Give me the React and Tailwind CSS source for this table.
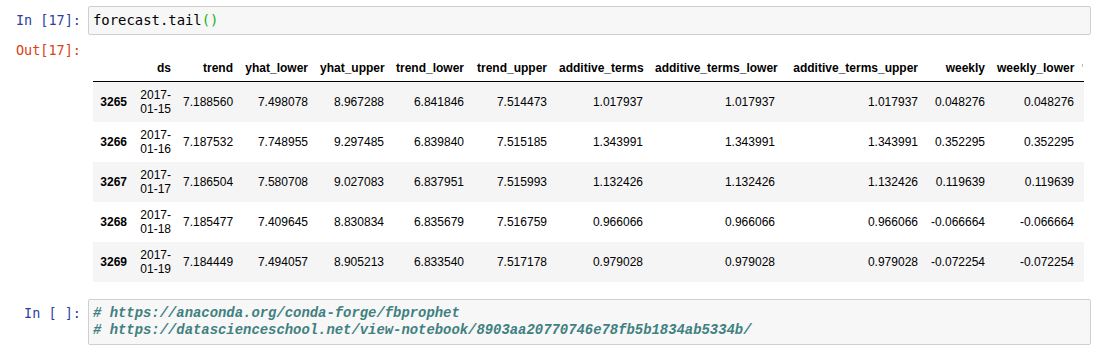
import React from "react";

const cols = [
  { name: "ds", w: "w-[44px]" },
  { name: "trend", w: "w-[62px]" },
  { name: "yhat_lower", w: "w-[75px]" },
  { name: "yhat_upper", w: "w-[76px]" },
  { name: "trend_lower", w: "w-[80px]" },
  { name: "trend_upper", w: "w-[83px]" },
  { name: "additive_terms", w: "w-[96px]" },
  { name: "additive_terms_lower", w: "w-[132px]" },
  { name: "additive_terms_upper", w: "w-[143px]" },
  { name: "weekly", w: "w-[67px]" },
  { name: "weekly_lower", w: "w-[89px]" },
];

const rows = [
  ["3265", "01-15", "7.188560", "7.498078", "8.967288", "6.841846", "7.514473", "1.017937", "1.017937", "1.017937", "0.048276", "0.048276"],
  ["3266", "01-16", "7.187532", "7.748955", "9.297485", "6.839840", "7.515185", "1.343991", "1.343991", "1.343991", "0.352295", "0.352295"],
  ["3267", "01-17", "7.186504", "7.580708", "9.027083", "6.837951", "7.515993", "1.132426", "1.132426", "1.132426", "0.119639", "0.119639"],
  ["3268", "01-18", "7.185477", "7.409645", "8.830834", "6.835679", "7.516759", "0.966066", "0.966066", "0.966066", "-0.066664", "-0.066664"],
  ["3269", "01-19", "7.184449", "7.494057", "8.905213", "6.833540", "7.517178", "0.979028", "0.979028", "0.979028", "-0.072254", "-0.072254"],
];

const mono = "font-['DejaVu_Sans_Mono','Liberation_Mono',monospace]";

export default function App() {
  return (
    <div className="w-[1104px] h-[359px] bg-white overflow-hidden pr-[13px] font-['Liberation_Sans',Arial,sans-serif]">
      {/* Cell 1 */}
      <div className="flex pt-[6px]">
        <div className={`w-[88px] pr-[7px] h-[29px] flex items-center justify-end text-[13.5px] text-[#303F9F] ${mono}`}>
          In&nbsp;[17]:
        </div>
        <div className={`flex-1 h-[29px] border border-[#cfcfcf] bg-[#f7f7f7] rounded-[2px] pl-[4px] flex items-center text-[13.9px] text-black ${mono}`}>
          <span>forecast.tail</span>
          <span className="text-[#22b022]">()</span>
        </div>
      </div>

      {/* Output */}
      <div className="flex mt-[6px]">
        <div className={`w-[88px] pr-[7px] leading-[19px] text-right text-[13.5px] text-[#D84315] ${mono}`}>
          Out[17]:
        </div>
        <div className="pl-[5px] pt-[14px]">
          <div className="relative w-[991px]">
            <table className="table-fixed border-collapse text-[12px] leading-[14px] text-black w-[991px]">
              <thead className="border-b border-black">
                <tr>
                  <th className="w-[40px] px-[6px] py-[6px]"></th>
                  {cols.map((c) => (
                    <th key={c.name} className={`${c.w} px-[6px] py-[6px] text-right font-bold whitespace-nowrap`}>
                      {c.name}
                    </th>
                  ))}
                  <th className="w-[4px] p-0"></th>
                </tr>
              </thead>
              <tbody>
                {rows.map((r, i) => (
                  <tr key={r[0]} className={i % 2 === 0 ? "bg-[#f5f5f5]" : "bg-white"}>
                    <th className="px-[6px] py-[6px] text-right font-bold align-middle">{r[0]}</th>
                    <td className="px-[6px] py-[6px] text-right align-middle">
                      2017-
                      <br />
                      {r[1]}
                    </td>
                    {r.slice(2).map((v, j) => (
                      <td key={j} className="px-[6px] py-[6px] text-right align-middle whitespace-nowrap">
                        {v}
                      </td>
                    ))}
                    <td className="p-0"></td>
                  </tr>
                ))}
              </tbody>
            </table>
            <span className="absolute right-[1px] top-[9px] w-[1px] h-[3px] bg-[#bbbbbb]"></span>
          </div>
        </div>
      </div>

      {/* Cell 2 */}
      <div className="flex mt-[17px]">
        <div className={`w-[88px] pr-[7px] pt-[6px] leading-[17px] text-right text-[13.5px] text-[#303F9F] ${mono}`}>
          In&nbsp;[&nbsp;]:
        </div>
        <div className="flex-1 h-[46px] border border-[#cfcfcf] bg-[#f7f7f7] rounded-[2px] pl-[4px] py-[5px] leading-[17px] text-[13.9px] italic font-bold text-[#408080] font-['Liberation_Mono','DejaVu_Sans_Mono',monospace]">
          <div># https://anaconda.org/conda-forge/fbprophet</div>
          <div># https://datascienceschool.net/view-notebook/8903aa20770746e78fb5b1834ab5334b/</div>
        </div>
      </div>
    </div>
  );
}
